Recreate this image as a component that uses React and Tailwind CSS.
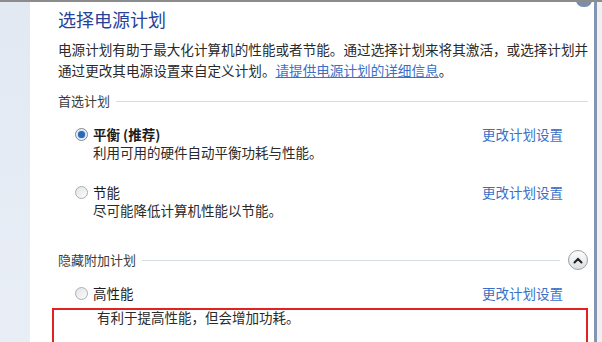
import React from 'react';

const font = { fontFamily: '"Noto Sans CJK SC", "Noto Sans", sans-serif' };

const Radio = ({ checked }) => (
  <span
    className={
      'w-[13px] h-[13px] rounded-full border flex items-center justify-center shrink-0 ' +
      (checked ? 'border-[#7d8795] bg-[#f4f6f8]' : 'border-[#a9aeb4] bg-gradient-to-br from-[#e2e4e6] to-[#fbfbfb]')
    }
  >
    {checked && <span className="w-[7px] h-[7px] rounded-full bg-[#2a68b8] shadow-[0_0_2px_#4ea0e8]" />}
  </span>
);

const SectionHeader = ({ label, children }) => (
  <div className="flex items-center h-[20px] text-[13px] text-[#3c3c3c]">
    <span className="whitespace-nowrap">{label}</span>
    <div className="flex-1 h-px bg-[#d6dde2] ml-[6px]" />
    {children}
  </div>
);

const PlanOption = ({ checked, name, bold, desc }) => (
  <div>
    <div className="flex items-center h-[18px]">
      <div className="w-[35px] flex justify-center pl-[11px]">
        <Radio checked={checked} />
      </div>
      <span className={'text-[13.5px] text-[#1c1c1c] ' + (bold ? 'font-bold' : '')}>{name}</span>
      <span className="ml-auto mr-[25px] text-[13.5px] text-[#3b6fc6]">更改计划设置</span>
    </div>
    {desc && <div className="pl-[35px] h-[18px] leading-[18px] text-[13.5px] text-[#2a2a2a]">{desc}</div>}
  </div>
);

export default function App() {
  return (
    <div className="w-[602px] h-[342px] overflow-hidden bg-white flex border-t-2 border-[#8c8c8c] relative" style={font}>
      <div className="absolute top-[-9px] right-[10px] w-[16px] h-[14px] rounded-full bg-[#7f8ea8]" />
      {/* sidebar */}
      <div className="w-[30px] shrink-0 bg-gradient-to-b from-[#e2e9f3] to-[#e9eef6]" />

      {/* main */}
      <div className="w-[564px] shrink-0 overflow-hidden pl-[28px] pr-[6px]">
        <h1 className="pt-[5px] text-[18px] leading-[24px] text-[#26439a] font-normal">选择电源计划</h1>

        <p className="mt-[8px] text-[13.6px] leading-[21px] text-[#2a2a2a] whitespace-nowrap">
          电源计划有助于最大化计算机的性能或者节能。通过选择计划来将其激活，或选择计划并
          <br />
          通过更改其电源设置来自定义计划。
          <span className="text-[#3b6fc6] underline">请提供电源计划的详细信息</span>。
        </p>

        <div className="mt-[10px]">
          <SectionHeader label="首选计划" />
        </div>

        <div className="mt-[14px]">
          <PlanOption checked name="平衡 (推荐)" bold desc="利用可用的硬件自动平衡功耗与性能。" />
        </div>

        <div className="mt-[22px]">
          <PlanOption name="节能" desc="尽可能降低计算机性能以节能。" />
        </div>

        <div className="mt-[31px]">
          <SectionHeader label="隐藏附加计划">
            <div className="ml-[8px] w-[20px] h-[20px] rounded-full border border-[#9aa0a6] bg-gradient-to-b from-[#fdfdfd] to-[#dcdfe2] flex items-center justify-center">
              <svg width="10" height="7" viewBox="0 0 10 7">
                <path d="M1.5 5.5 L5 2 L8.5 5.5" fill="none" stroke="#222" strokeWidth="2" strokeLinecap="round" />
              </svg>
            </div>
          </SectionHeader>
        </div>

        <div className="mt-[14px]">
          <PlanOption name="高性能" />
        </div>

        <div className="mt-[6px] -ml-[6px] h-[60px] border-2 border-[#e0231e]">
          <div className="pl-[43px] text-[13.5px] leading-[14px] text-[#2a2a2a]">有利于提高性能，但会增加功耗。</div>
        </div>
      </div>

      {/* window frame edge */}
      <div className="w-[3px] shrink-0 bg-[#8595b0]" />
      <div className="flex-1 bg-[#eef0f3]" />
    </div>
  );
}
